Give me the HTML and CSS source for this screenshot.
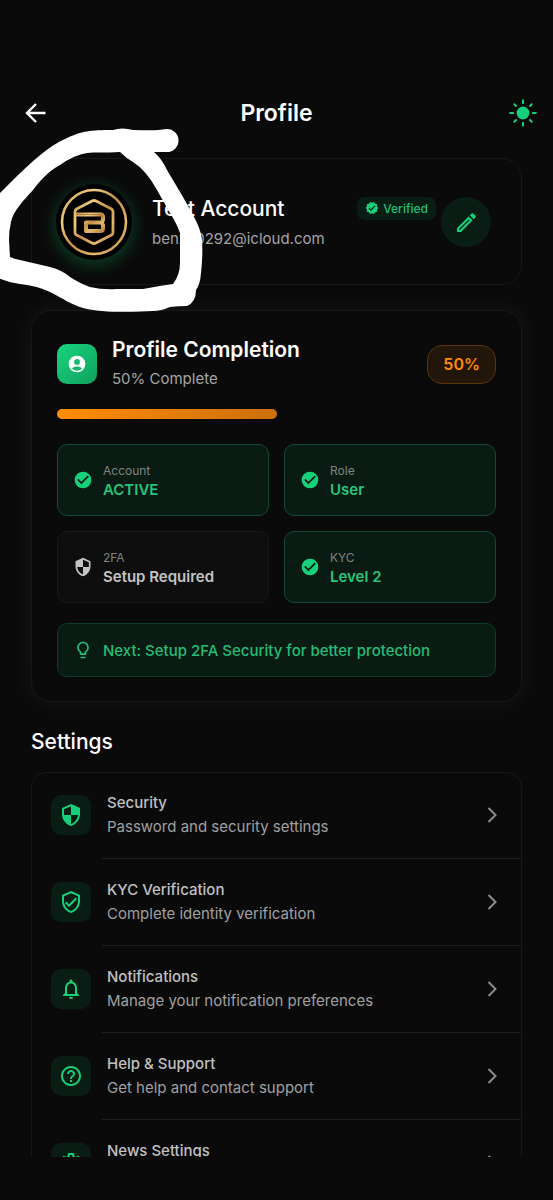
FILE: index.html
```
<!doctype html>
<html lang="en">
<head>
<meta charset="UTF-8">
<meta name="viewport" content="width=device-width, initial-scale=1">
<title>Profile</title>
<link rel="stylesheet" href="styles.css">
</head>

<body>

<!-- shared icons -->
<svg class="sprite" aria-hidden="true">
   <symbol id="check" viewBox="0 0 24 24"><path d="M12 2a10 10 0 1 0 0 20 10 10 0 0 0 0-20zm-2 15-5-5 1.400-1.400 3.600 3.600 7.600-7.600L19 8z"/></symbol>
   <symbol id="chevron" viewBox="0 0 24 24"><path d="m8.500 5 7 7-7 7" fill="none" stroke="currentColor" stroke-width="2"/></symbol>
</svg>

<header class="topbar">
   <button class="icon-button" aria-label="Back">
      <svg class="icon-back" viewBox="0 0 24 24"><path d="M21.500 12H3.500M12 3l-9 9 9 9" fill="none" stroke="currentColor" stroke-width="2.400"/></svg>
   </button>
   <h1>Profile</h1>
   <button class="icon-button theme" aria-label="Toggle theme">
      <svg class="icon-sun" viewBox="0 0 28 28">
         <circle cx="14" cy="14" r="6.400"/>
         <path d="M14 1.200v3M14 23.800v3M1.200 14h3M23.800 14h3M5.300 5.300l1.700 1.700M21 21l1.700 1.700M22.700 5.300 21 7M7 21l-1.700 1.700" fill="none" stroke="currentColor" stroke-width="2" stroke-linecap="round"/>
      </svg>
   </button>
</header>

<main class="content">
   <section class="card user">
      <svg class="avatar" viewBox="0 0 76 76" role="img" aria-label="Avatar">
         <defs>
            <linearGradient id="gold" x1="0" y1="0" x2="1" y2="1">
               <stop offset="0" stop-color="#c99b50"/>
               <stop offset=".25" stop-color="#f0cc80"/>
               <stop offset=".5" stop-color="#c48c48"/>
               <stop offset=".75" stop-color="#e5b96c"/>
               <stop offset="1" stop-color="#b98543"/>
            </linearGradient>
         </defs>
         <circle cx="38" cy="38" r="38" fill="#000"/>
         <g fill="none" stroke="url(#gold)" stroke-linejoin="round">
            <circle cx="38" cy="38" r="32" stroke-width="2.600"/>
            <path d="M19 32V27.500Q19 26 20.500 25L36 17Q38 16 40 17L55.500 25Q57 26 57 27.500V48.500Q57 50 55.500 51L40 59Q38 60 36 59L20.500 51Q19 50 19 48.500V32" stroke-width="2.800"/>
            <path d="M20 30.500H44.500Q47 30.500 47 33V36L45.500 38.500 47 41V44.500Q47 47 44.500 47H30V38.500H45.500" stroke-width="4"/>
         </g>
         <path d="M21 30.500H44Q46.500 30.500 46.500 34" fill="none" stroke="#8a5c2a" stroke-width=".6"/>
      </svg>
      <div class="user-text">
         <div class="user-line">
            <h2>Test Account</h2>
            <span class="verified">
               <svg viewBox="0 0 24 24"><path d="m23 12-2.440-2.780.34-3.680-3.610-.82-1.890-3.180L12 3 8.600 1.540 6.710 4.720l-3.610.81.34 3.680L1 12l2.440 2.780-.34 3.690 3.610.82 1.890 3.180L12 21l3.400 1.460 1.890-3.180 3.610-.82-.34-3.680L23 12zm-13 5-4-4 1.410-1.410L10 14.170l6.590-6.590L18 9l-8 8z"/></svg>
               Verified
            </span>
         </div>
         <p>benxx0292@icloud.com</p>
      </div>
      <button class="edit" aria-label="Edit profile">
         <svg viewBox="0 0 24 24"><path d="M14.060 9.020l.92.92L5.920 19H5v-.92l9.060-9.060M17.660 3c-.25 0-.51.100-.7.290l-1.830 1.830 3.750 3.750 1.830-1.830c.39-.39.39-1.020 0-1.410l-2.340-2.340c-.2-.2-.45-.29-.71-.29zm-3.600 3.190L3 17.250V21h3.750L17.810 9.940l-3.750-3.750z"/></svg>
      </button>
   </section>

   <section class="card completion">
      <div class="completion-head">
         <div class="badge-icon">
            <svg viewBox="0 0 24 24"><path fill-rule="evenodd" d="M12 2a10 10 0 1 0 0 20 10 10 0 0 0 0-20zm0 4a3.500 3.500 0 1 1 0 7 3.500 3.500 0 0 1 0-7zm0 14c-2.400 0-4.500-1-6-2.600 1.400-1.600 3.900-2.400 6-2.400s4.600.8 6 2.400C16.500 19 14.400 20 12 20z"/></svg>
         </div>
         <div class="completion-text">
            <h2>Profile Completion</h2>
            <p>50% Complete</p>
         </div>
         <span class="percent">50%</span>
      </div>
      <div class="progress" role="progressbar" aria-label="Profile completion" aria-valuenow="50" aria-valuemin="0" aria-valuemax="100">
         <div class="progress-fill" style="width: 50%"></div>
      </div>
      <div class="status-grid">
         <div class="status done">
            <svg><use href="#check"/></svg>
            <div><span>Account</span><strong>ACTIVE</strong></div>
         </div>
         <div class="status done">
            <svg><use href="#check"/></svg>
            <div><span>Role</span><strong>User</strong></div>
         </div>
         <div class="status">
            <svg viewBox="0 0 24 24"><path fill-rule="evenodd" d="M12 1 3 5v6c0 5.550 3.840 10.740 9 12 5.160-1.260 9-6.450 9-12V5l-9-4zM12 3.190l7 3.110V12h-7zM5 12h7v8.940C8.280 19.790 5.530 16.120 5 12z"/></svg>
            <div><span>2FA</span><strong>Setup Required</strong></div>
         </div>
         <div class="status done">
            <svg><use href="#check"/></svg>
            <div><span>KYC</span><strong>Level 2</strong></div>
         </div>
      </div>
      <div class="tip">
         <svg viewBox="0 0 24 24"><path d="M9 21c0 .55.45 1 1 1h4c.55 0 1-.45 1-1v-1H9v1zm3-19C8.140 2 5 5.140 5 9c0 2.380 1.190 4.470 3 5.740V17c0 .55.45 1 1 1h6c.55 0 1-.45 1-1v-2.260c1.810-1.270 3-3.360 3-5.740 0-3.860-3.140-7-7-7zm2.850 11.100-.85.6V16h-4v-2.300l-.85-.6C7.800 12.160 7 10.630 7 9c0-2.760 2.240-5 5-5s5 2.240 5 5c0 1.630-.8 3.160-2.150 4.100z"/></svg>
         <p>Next: Setup 2FA Security for better protection</p>
      </div>
   </section>

   <h2 class="section-title">Settings</h2>

   <nav class="card settings">
      <a class="row" href="#security">
         <span class="tile"><svg viewBox="0 0 24 24"><path fill-rule="evenodd" d="M12 1 3 5v6c0 5.550 3.840 10.740 9 12 5.160-1.260 9-6.450 9-12V5l-9-4zM12 3.190V12H5V6.300zM12 12h7c-.53 4.120-3.280 7.790-7 8.940z"/></svg></span>
         <span class="row-text"><b>Security</b><span>Password and security settings</span></span>
         <svg class="chevron"><use href="#chevron"/></svg>
      </a>
      <a class="row" href="#kyc">
         <span class="tile"><svg viewBox="0 0 24 24"><path d="M12 1 3 5v6c0 5.550 3.840 10.740 9 12 5.160-1.260 9-6.450 9-12V5l-9-4zm7 10c0 4.520-2.980 8.690-7 9.930-4.020-1.240-7-5.410-7-9.930V6.300l7-3.110 7 3.110V11zm-11.590.59L6 13l4 4 8-8-1.410-1.420L10 14.170z"/></svg></span>
         <span class="row-text"><b>KYC Verification</b><span>Complete identity verification</span></span>
         <svg class="chevron"><use href="#chevron"/></svg>
      </a>
      <a class="row" href="#notifications">
         <span class="tile"><svg viewBox="0 0 24 24"><path d="M12 22c1.100 0 2-.9 2-2h-4c0 1.100.9 2 2 2zm6-6v-5c0-3.070-1.630-5.640-4.500-6.320V4c0-.83-.67-1.500-1.500-1.500s-1.500.67-1.500 1.500v.68C7.640 5.360 6 7.920 6 11v5l-2 2v1h16v-1l-2-2zm-2 1H8v-6c0-2.480 1.510-4.500 4-4.500s4 2.020 4 4.500v6z"/></svg></span>
         <span class="row-text"><b>Notifications</b><span>Manage your notification preferences</span></span>
         <svg class="chevron"><use href="#chevron"/></svg>
      </a>
      <a class="row" href="#help">
         <span class="tile"><svg viewBox="0 0 24 24"><path d="M11 18h2v-2h-2v2zm1-16C6.480 2 2 6.480 2 12s4.480 10 10 10 10-4.480 10-10S17.520 2 12 2zm0 18c-4.410 0-8-3.590-8-8s3.590-8 8-8 8 3.590 8 8-3.590 8-8 8zm0-14c-2.210 0-4 1.790-4 4h2c0-1.100.9-2 2-2s2 .9 2 2c0 2-3 1.750-3 5h2c0-2.250 3-2.500 3-5 0-2.210-1.790-4-4-4z"/></svg></span>
         <span class="row-text"><b>Help &amp; Support</b><span>Get help and contact support</span></span>
         <svg class="chevron"><use href="#chevron"/></svg>
      </a>
      <a class="row" href="#news">
         <span class="tile"><svg viewBox="0 0 24 24"><path d="M10 3h4l.6 2.800 1.900 1.100 2.700-.9 2 3.500-2.100 1.900v2.200l2.100 1.900-2 3.500-2.700-.9-1.900 1.100L14 22h-4l-.6-2.800-1.900-1.100-2.700.9-2-3.500 2.100-1.900v-2.200L2.800 9.500l2-3.500 2.700.9 1.900-1.100z" fill="none" stroke="currentColor" stroke-width="2"/><circle cx="12" cy="12.500" r="3"/></svg></span>
         <span class="row-text"><b>News Settings</b></span>
         <svg class="chevron"><use href="#chevron"/></svg>
      </a>
   </nav>
</main>

<!-- marker drawn over the avatar -->
<svg class="marker" viewBox="0 0 210 320" aria-hidden="true">
   <path fill-rule="evenodd" d="M167 129C155 131 145 130 133 130Q122 127 113 130C90 130 82 131 67 138C47 147 34 160 13 180L-4 197V277Q8 283 20 284Q38 286 50 292C64 299 70 304 83 308C100 313 135 312 153 311Q161 311 170 307Q178 306 187 306Q196 302 196 290Q200 285 201 273Q203 255 202 240C201 226 190 210 183 197L167 170Q162 159 154 152H167A11.500 11.500 0 0 0 167 129zM120 152C105 153 95 152 87 153Q74 155 60 165C47 172 39 182 33 190C24 200 13 211 11 222Q9 230 9 240L10 257Q14 259 20 260L50 267Q62 270 70 277Q81 284 90 287Q103 290 117 289H143Q158 286 173 284Q180 275 180 263V233Q177 224 170 213L157 190Q146 170 133 162Q126 158 120 152z"/>
</svg>

</body>
</html>
```
FILE: styles.css
```
* {
   box-sizing: border-box;
}

body, h1, h2, p {
   margin: 0;
   padding: 0;
}

body {
   display: flex;
   flex-direction: column;
   height: 100vh;
   padding: 88px 0 43px;
   overflow: hidden;
   background: #0a0a0a;
   color: #fff;
   font-family: Inter, "Liberation Sans", sans-serif;
   font-size: 15px;
}

svg {
   display: block;
   flex: none;
   fill: currentColor;
}

button {
   padding: 0;
   border: 0;
   background: none;
   color: inherit;
   cursor: pointer;
}

.sprite {
   position: absolute;
   width: 0;
   height: 0;
}

/* top bar */

.topbar {
   display: flex;
   flex: none;
   align-items: center;
   justify-content: space-between;
   height: 50px;
   padding: 0 16px;
}

.topbar h1 {
   font-size: 23px;
   font-weight: 600;
}

.icon-button {
   display: flex;
   align-items: center;
   justify-content: center;
   width: 40px;
   height: 48px;
}

.icon-back {
   width: 24px;
   height: 24px;
}

.theme {
   justify-content: flex-end;
   color: #16d07a;
}

.icon-sun {
   width: 28px;
   height: 28px;
}

/* cards */

.content {
   flex: 1;
   min-height: 0;
   padding: 20px 31px 0;
   overflow-y: auto;
   scrollbar-width: none;
}

.card {
   border: 1px solid #181818;
   border-radius: 20px;
   background: #0a0a0a;
}

.user {
   display: flex;
   align-items: center;
   padding: 25px 30px 24px 24px;
}

.avatar {
   width: 76px;
   height: 76px;
   border-radius: 50%;
   box-shadow: 0 4px 16px 2px rgba(16, 185, 105, .28);
}

.user-text {
   flex: 1;
   min-width: 0;
   padding: 0 5px 0 20px;
}

.user-line {
   display: flex;
   align-items: center;
   justify-content: space-between;
   height: 34px;
}

.user h2 {
   font-size: 21px;
   font-weight: 500;
}

.user p {
   color: #a5a5a5;
   line-height: 28px;
}

.verified {
   display: flex;
   align-items: center;
   gap: 4px;
   height: 23px;
   padding: 0 8px;
   border-radius: 8px;
   background: #0a1d15;
   color: #23bd75;
   font-size: 12px;
   font-weight: 500;
}

.verified svg {
   width: 14px;
   height: 14px;
   color: #16d07a;
}

.edit {
   display: flex;
   flex: none;
   align-items: center;
   justify-content: center;
   width: 50px;
   height: 50px;
   border-radius: 50%;
   background: #0a1d15;
   color: #16d07a;
}

.edit svg {
   width: 25px;
   height: 25px;
}

/* profile completion */

.completion {
   margin-top: 25px;
   padding: 24px 25px;
   box-shadow: 0 0 20px 4px rgba(255, 255, 255, .04);
}

.completion-head {
   display: flex;
   align-items: center;
   gap: 15px;
}

.badge-icon {
   display: flex;
   align-items: center;
   justify-content: center;
   width: 40px;
   height: 40px;
   border-radius: 10px;
   background: linear-gradient(135deg, #18d47d, #10a05f);
}

.badge-icon svg {
   width: 20px;
   height: 20px;
}

.completion-text {
   flex: 1;
}

.completion h2 {
   font-size: 21px;
   font-weight: 600;
   line-height: 30px;
}

.completion-text p {
   color: #a5a5a5;
   line-height: 28px;
}

.percent {
   padding: 0 15px;
   border: 1px solid #5a350c;
   border-radius: 15px;
   background: #22160a;
   color: #ff8a0a;
   font-size: 16px;
   font-weight: 600;
   line-height: 37px;
}

.progress {
   height: 10px;
   margin-top: 16px;
}

.progress-fill {
   height: 100%;
   border-radius: 5px;
   background: linear-gradient(90deg, #ff8c05, #cc700c);
}

.status-grid {
   display: grid;
   grid-template-columns: 1fr 1fr;
   gap: 15px;
   margin-top: 25px;
}

.status {
   display: flex;
   align-items: center;
   gap: 10px;
   height: 72px;
   padding: 0 15px;
   border: 1px solid #181818;
   border-radius: 10px;
   background: #0e0e0e;
   color: #c4c4c4;
}

.status svg, .tip svg {
   width: 20px;
   height: 20px;
}

.status span, .status strong {
   display: block;
   line-height: 19px;
}

.status span {
   color: #7d8580;
   font-size: 12px;
}

.status strong {
   font-weight: 600;
}

.done {
   border-color: #124b31;
   background: #0a1b14;
   color: #16d07a;
}

.done strong {
   color: #25c57b;
}

.tip {
   display: flex;
   align-items: center;
   gap: 10px;
   height: 54px;
   margin-top: 20px;
   padding: 0 15px;
   border: 1px solid #0f3d28;
   border-radius: 10px;
   background: #0a1b14;
   color: #25bd76;
   font-weight: 500;
}

/* settings list */

.section-title {
   margin: 25px 0 15px;
   font-size: 21px;
   font-weight: 500;
   line-height: 30px;
}

.settings {
   overflow: hidden;
   border-radius: 15px;
}

.row {
   position: relative;
   display: flex;
   align-items: center;
   gap: 16px;
   height: 87px;
   padding: 0 17px 3px 19px;
   color: #c0c0c0;
   text-decoration: none;
}

.row::after {
   content: "";
   position: absolute;
   right: 0;
   bottom: 1px;
   left: 70px;
   height: 1px;
   background: #1e1e1e;
}

.tile {
   display: flex;
   align-items: center;
   justify-content: center;
   width: 40px;
   height: 40px;
   border-radius: 10px;
   background: #0a1d15;
   color: #16d07a;
}

.tile svg {
   width: 24px;
   height: 24px;
}

.row-text {
   flex: 1;
   min-height: 48px;
}

.row-text b, .row-text span {
   display: block;
   line-height: 24px;
}

.row-text b {
   font-weight: 500;
}

.row-text span {
   color: #a0a0a0;
}

.chevron {
   width: 24px;
   height: 24px;
   color: #8c8c8c;
}

/* white pen mark */

.marker {
   position: absolute;
   top: 0;
   left: 0;
   width: 210px;
   height: 320px;
   fill: #fff;
   pointer-events: none;
}
```
